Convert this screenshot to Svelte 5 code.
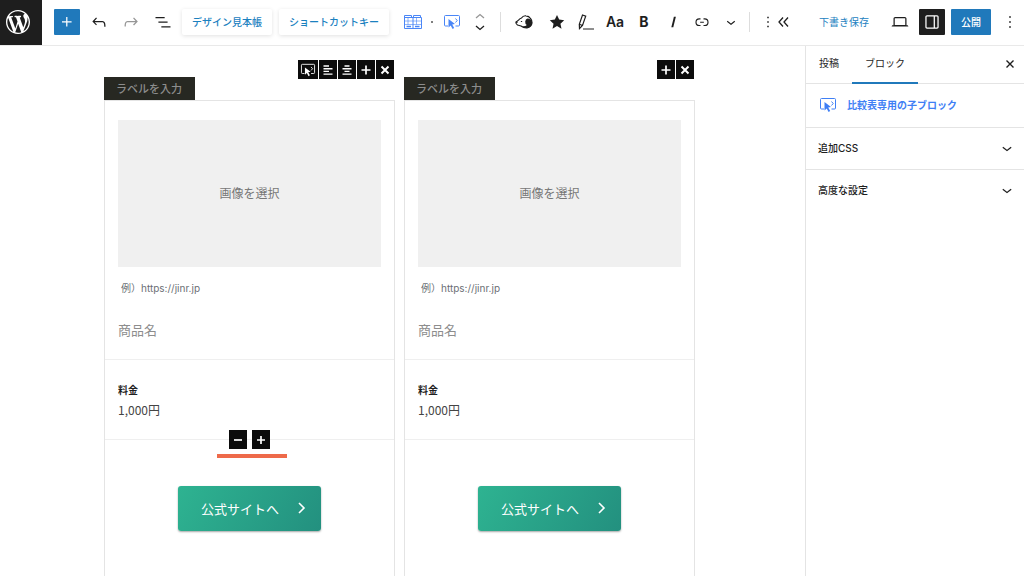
<script lang="ts">
  let activeTab = $state('block');

  const glyphs: Record<string, string> = {
    wordpress:
      'M20 10c0-5.51-4.49-10-10-10C4.48 0 0 4.49 0 10c0 5.52 4.48 10 10 10 5.51 0 10-4.48 10-10zM7.78 15.37L4.37 6.22c.55-.02 1.17-.08 1.17-.08.5-.06.44-1.13-.06-1.11 0 0-1.45.11-2.37.11-.18 0-.37 0-.58-.01C4.12 2.69 6.87 1.11 10 1.11c2.33 0 4.45.87 6.05 2.34-.68-.11-1.65.39-1.65 1.58 0 .74.45 1.36.9 2.1.35.61.55 1.36.55 2.46 0 1.49-1.4 5-1.4 5l-3.03-8.37c.54-.02.82-.17.82-.17.5-.05.44-1.25-.06-1.22 0 0-1.44.12-2.38.12-.87 0-2.33-.12-2.33-.12-.5-.03-.56 1.2-.06 1.22l.92.08 1.26 3.41zM17.41 10c.24-.64.74-1.87.43-4.25.7 1.29 1.05 2.71 1.05 4.25 0 3.29-1.73 6.24-4.4 7.78.97-2.59 1.94-5.2 2.92-7.78zM6.1 18.09C3.12 16.65 1.11 13.53 1.11 10c0-1.3.23-2.48.72-3.59C3.25 10.3 4.67 14.2 6.1 18.09zm4.03-6.63l2.58 6.98c-.86.29-1.76.45-2.71.45-.79 0-1.57-.11-2.29-.33.81-2.38 1.62-4.74 2.42-7.1z',
    plus: 'M11 12.5V17.5H12.5V12.5H17.5V11H12.5V6H11V11H6V12.5H11Z',
    undo: 'M18.3 11.7c-.6-.6-1.4-.9-2.3-.9H6.7l2.9-3.3-1.1-1-4.5 5L8.5 16l1-1-2.7-2.7H16c.5 0 .9.2 1.3.5 1 1 1 3.4 1 4.5v.3h1.5v-.2c0-1.5 0-4.3-1.5-5.7z',
    redo: 'M15.6 6.5l-1.1 1 2.9 3.3H8c-.9 0-1.7.3-2.3.9-1.4 1.5-1.4 4.2-1.4 5.6v.2h1.5v-.3c0-1.1 0-3.5 1-4.5.3-.3.7-.5 1.3-.5h9.2L14.5 15l1.1 1.1 4.6-4.6-4.6-5z',
    outline: 'M3 6h11v1.5H3V6Zm3.5 5.5h11V13h-11v-1.5ZM21 17H10v1.5h11V17Z',
    star: 'M12 2.6l2.9 6.2 6.7.8-5 4.6 1.4 6.7-6-3.4-6 3.4 1.4-6.7-5-4.6 6.7-.8z',
    italic: 'M13.2 5h2.6l-3.4 14H9.800z',
    link: 'M10 17.389H8.444A5.194 5.194 0 1 1 8.444 7H10v1.5H8.444a3.694 3.694 0 0 0 0 7.389H10v1.5ZM14 7h1.556a5.194 5.194 0 0 1 0 10.39H14v-1.5h1.556a3.694 3.694 0 0 0 0-7.39H14V7Zm-4.5 6h5v-1.5h-5V13Z',
    chevron: 'M17.5 11.6L12 16l-5.5-4.4.9-1.2L12 14l4.5-3.6 1 1.2z',
    dots: 'M13 19h-2v-2h2v2zm0-6h-2v-2h2v2zm0-6h-2V5h2v2z',
    laptop:
      'M20.5 16h-.7V8c0-1.1-.9-2-2-2H6.2c-1.1 0-2 .9-2 2v8h-.7c-.8 0-1.5.7-1.5 1.5h20c0-.8-.7-1.5-1.5-1.5zM5.7 8c0-.3.2-.5.5-.5h11.6c.3 0 .5.2.5.5v7.6H5.7V8z',
    drawer:
      'M18 4H6c-1.1 0-2 .9-2 2v12c0 1.1.9 2 2 2h12c1.1 0 2-.9 2-2V6c0-1.1-.9-2-2-2zm-4 14.5H6c-.3 0-.5-.2-.5-.5V6c0-.3.2-.5.5-.5h8v13zm4.500-.5c0 .3-.2.5-.5.5h-2.500v-13H18c.3 0 .5.2.5.5v12z',
  };

  const products = [
    { id: 'a', selected: true },
    { id: 'b', selected: false },
  ];

  const panels = ['追加CSS', '高度な設定'];
</script>

{#snippet icon(name: string, size = 20)}
  <svg
    width={size}
    height={size}
    viewBox={name === 'wordpress' ? '0 0 20 20' : '0 0 24 24'}
    fill="currentColor"
    aria-hidden="true"><path d={glyphs[name]} /></svg>
{/snippet}

{#snippet pointer(width: number)}
  <svg {width} height={width - 2} viewBox="0 0 18 16" fill="none" stroke="currentColor" aria-hidden="true">
    <path d="M5 12H2.500Q1.500 12 1.500 11V2.500Q1.500 1.500 2.500 1.500H15.500Q16.500 1.500 16.500 2.500V11Q16.500 12 15.500 12H12.500" />
    <path d="M12.500 4.500l1.700 2-1.700 2" />
    <path d="M5.500 5l6.500 5-2.800.5 2 3.600-1.600.9-1.900-3.600-2.200 2z" fill="currentColor" stroke="none" />
  </svg>
{/snippet}

{#snippet stroke(d: string, width = 2, size = 18)}
  <svg width={size} height={size} viewBox="0 0 18 18" fill="none" stroke="currentColor" stroke-width={width} aria-hidden="true">
    <path {d} />
  </svg>
{/snippet}

<div class="page">
  <header class="topbar">
    <a class="home" href="#home" aria-label="WordPress">{@render icon('wordpress', 24)}</a>
    <button class="square primary" aria-label="追加">{@render icon('plus', 20)}</button>

    <div class="history">
      <button aria-label="元に戻す">{@render icon('undo')}</button>
      <button class="muted" aria-label="やり直し">{@render icon('redo')}</button>
      <button aria-label="リスト表示">{@render icon('outline')}</button>
    </div>

    <div class="chips">
      <button class="chip">デザイン見本帳</button>
      <button class="chip">ショートカットキー</button>
    </div>

    <div class="block-tools">
      <button class="blue" aria-label="比較表">
        <svg width="20" height="18" viewBox="0 0 20 18" fill="none" stroke="currentColor" aria-hidden="true">
          <path d="M1.500 2.500H8.500V4.500M1.500 2.500V15.500H18.500V4.500H1.500M10.500 4.500V2.500H17.500V4.500M10 4.500V15.500" />
          <path d="M1.500 8H18.500M1.500 11.500H18.500M5 4.500V11.500M13.500 4.500V11.500" opacity=".6" />
          <path d="M3.500 13.500H8M12 13.500H16.500" stroke-width="1.400" />
        </svg>
      </button>
      <span class="dot"></span>
      <button class="blue" aria-label="子ブロック">{@render pointer(18)}</button>
      <div class="mover">
        <button class="muted" aria-label="上に移動">
          <svg width="12" height="8" viewBox="0 0 12 8" fill="none" stroke="currentColor" stroke-width="1.300" aria-hidden="true"><path d="M2 6l4-3.500L10 6" /></svg>
        </button>
        <button aria-label="下に移動">
          <svg width="12" height="8" viewBox="0 0 12 8" fill="none" stroke="currentColor" stroke-width="1.300" aria-hidden="true"><path d="M2 2l4 3.500L10 2" /></svg>
        </button>
      </div>
    </div>

    <div class="formats">
      <button aria-label="吹き出し">
        <svg width="20" height="18" viewBox="0 0 20 18" aria-hidden="true">
          <path d="M7.500 5Q9 2.500 12 2.800Q15 3 16.500 5.500Q18.300 7.500 18 10Q17.500 14 13 14.800Q9.500 15 7 13L3.500 12Q1.500 10.500 2 9L4.500 7.200Q5.500 5.500 7.500 5z" fill="#fff" stroke="currentColor" stroke-width="1.200" />
          <path d="M13.500 5.500Q17 5.500 18.200 9Q18.200 14 13 15Q9.800 15 8.500 13.200Q11.500 13.500 12.800 12Q11 11 11.200 8.500Q11.500 6 13.500 5.500z" fill="currentColor" />
          <path d="M1.800 9l1.800.4M7.500 8v1" stroke="currentColor" stroke-width="1.300" />
        </svg>
      </button>
      <button aria-label="お気に入り">{@render icon('star', 18)}</button>
      <button aria-label="マーカー">
        <svg width="18" height="18" viewBox="0 0 18 18" fill="none" stroke="currentColor" stroke-width="1.200" aria-hidden="true">
          <path d="M5.500 2L8.700 3.200L5.500 12.500L2.500 15.500L2.300 11.300zM2.400 11.300L5.500 12.500" />
          <path d="M6 16H17" stroke-width="1" />
        </svg>
      </button>
      <button class="letters" aria-label="文字サイズ">Aa</button>
      <button class="letters strong" aria-label="太字">B</button>
      <button aria-label="イタリック">{@render icon('italic', 18)}</button>
      <button aria-label="リンク">{@render icon('link', 18)}</button>
      <button aria-label="さらに表示">{@render icon('chevron', 18)}</button>
    </div>

    <div class="overflow">
      <button aria-label="オプション">{@render icon('dots', 18)}</button>
      <button aria-label="ツールバーを隠す">{@render stroke('M8 4.500L4 9l4 4.500M13 4.500L9 9l4 4.500', 1.3, 18)}</button>
    </div>

    <div class="actions">
      <button class="draft">下書き保存</button>
      <button aria-label="プレビュー">{@render icon('laptop')}</button>
      <div class="publish-group">
        <button class="square dark" aria-label="設定">{@render icon('drawer')}</button>
        <button class="publish">公開</button>
      </div>
      <button aria-label="その他">{@render icon('dots')}</button>
    </div>
  </header>

  <div class="body">
    <main class="canvas">
      {#each products as product (product.id)}
        <section class="product">
          <div class="product-head">
            <input class="label" aria-label="ラベル" placeholder="ラベルを入力" />
            <div class="tiles">
              {#if product.selected}
                <button class="tile wide" aria-label="ボタン">{@render pointer(16)}</button>
                <button class="tile" aria-label="左寄せ">{@render stroke('M4.500 5H10M4.500 7.700H13.500M4.500 10.400H10M4.500 13.100H13.500', 1.4)}</button>
                <button class="tile" aria-label="中央寄せ">{@render stroke('M6.500 5H11.500M4.500 7.700H13.500M6.500 10.400H11.500M4.500 13.100H13.500', 1.4)}</button>
              {/if}
              <button class="tile" aria-label="列を追加">{@render stroke('M9 4.500V13.500M4.500 9H13.500', 1.7)}</button>
              <button class="tile" aria-label="列を削除">{@render stroke('M5.500 5.500L12.500 12.500M12.500 5.500L5.500 12.500', 2)}</button>
            </div>
          </div>

          <div class="card">
            <div class="intro">
              <button class="image">画像を選択</button>
              <input class="url" aria-label="リンク先" placeholder="例）https://jinr.jp" />
              <input class="name" aria-label="商品名" placeholder="商品名" />
            </div>
            <div class="price">
              <h3>料金</h3>
              <p>1,000円</p>
              {#if product.selected}
                <div class="row-tools">
                  <div class="row-buttons">
                    <button class="tile" aria-label="行を削除">{@render stroke('M5 9H13', 1.7)}</button>
                    <button class="tile" aria-label="行を追加">{@render stroke('M9 5V13M5 9H13', 1.7)}</button>
                  </div>
                  <span class="underline"></span>
                </div>
              {/if}
            </div>
            <div class="cta">
              <a class="official" href="#official">
                <span>公式サイトへ</span>
                <svg width="10" height="14" viewBox="0 0 10 14" fill="none" stroke="currentColor" stroke-width="1.600" aria-hidden="true"><path d="M2 1l5 5-5 5" /></svg>
              </a>
            </div>
          </div>
        </section>
      {/each}
    </main>

    <aside class="sidebar">
      <div class="tabs" role="tablist">
        <button role="tab" aria-selected={activeTab === 'post'} onclick={() => (activeTab = 'post')}>投稿</button>
        <button role="tab" aria-selected={activeTab === 'block'} onclick={() => (activeTab = 'block')}>ブロック</button>
        <button class="close" aria-label="閉じる">{@render stroke('M5.500 5.500L12.500 12.500M12.500 5.500L5.500 12.500', 1.4)}</button>
      </div>
      <h2>{@render pointer(18)}<span>比較表専用の子ブロック</span></h2>
      {#each panels as panel}
        <button class="panel" aria-expanded="false"><span>{panel}</span>{@render icon('chevron')}</button>
      {/each}
    </aside>
  </div>
</div>

<style>
  .page {
    --ink: #1e1e1e;
    --blue: #2079bb;
    --bright: #3f7ff5;
    --line: #e4e4e4;
    display: flex;
    flex-direction: column;
    min-height: 100vh;
    background: #fff;
    color: var(--ink);
    font: 10px/16px Inter, 'Noto Sans CJK JP', sans-serif;
  }

  .page :global(*) {
    box-sizing: border-box;
  }

  button,
  input {
    margin: 0;
    padding: 0;
    border: 0;
    background: none;
    color: inherit;
    font: inherit;
  }

  button {
    display: flex;
    align-items: center;
    justify-content: center;
    cursor: pointer;
    white-space: nowrap;
  }

  svg {
    display: block;
    flex: none;
  }

  /* top bar */
  .topbar {
    display: flex;
    align-items: center;
    height: 46px;
    border-bottom: 1px solid #e9e9e9;
    padding: 0 4px 2px 0;
  }

  .topbar > * {
    flex: none;
  }

  .home {
    display: flex;
    align-items: center;
    align-self: flex-start;
    width: 42px;
    height: 45px;
    margin-right: 12px;
    padding: 0 0 2px 6px;
    background: var(--ink);
    color: #fff;
  }

  .square {
    width: 26px;
    height: 26px;
    border-radius: 1px;
  }

  .primary {
    background: var(--blue);
    color: #fff;
  }

  .dark {
    background: var(--ink);
    color: #fff;
  }

  .history {
    display: flex;
    gap: 12px;
    margin: 0 9px;
  }

  .muted {
    color: #969696;
  }

  .chips {
    display: flex;
    gap: 7px;
  }

  .chip {
    height: 26px;
    padding: 0 10px;
    border-radius: 2px;
    background: #fff;
    box-shadow: 0 1px 4px rgba(0, 0, 0, 0.12);
    color: #1b81bf;
    font-weight: 500;
  }

  .block-tools {
    display: flex;
    align-items: center;
    margin-left: 14px;
    padding-right: 14px;
    border-right: 1px solid #ddd;
    height: 20px;
  }

  .blue {
    color: #4a86f7;
  }

  .dot {
    width: 2px;
    height: 2px;
    margin: 0 10px 0 8px;
    border-radius: 1px;
    background: #555;
  }

  .mover {
    display: flex;
    flex-direction: column;
    gap: 4px;
    margin-left: 13px;
  }

  .formats {
    display: flex;
    align-items: center;
    height: 20px;
    margin-left: 13px;
    padding-right: 8px;
    border-right: 1px solid #ddd;
  }

  .formats button {
    width: 20px;
    margin-right: 9px;
  }

  .formats button:first-child {
    margin-right: 13px;
  }

  .formats button:last-child {
    margin-right: 0;
  }

  .letters {
    font: 600 14px/20px Inter, sans-serif;
  }

  .strong {
    font-weight: 700;
  }

  .overflow {
    display: flex;
    margin-left: 9px;
  }

  .overflow button + button {
    margin-left: -2px;
  }

  .actions {
    display: flex;
    align-items: center;
    gap: 9px;
    margin-left: auto;
  }

  .draft {
    margin-right: 12px;
    color: #1b81bf;
  }

  .publish-group {
    display: flex;
    gap: 6px;
  }

  .publish {
    width: 40px;
    height: 26px;
    border-radius: 1px;
    background: var(--blue);
    color: #fff;
    font-weight: 500;
  }

  /* editor canvas */
  .body {
    display: flex;
    flex: 1;
  }

  .canvas {
    display: grid;
    grid-template-columns: 1fr 1fr;
    gap: 9px;
    flex: 1;
    min-width: 0;
    padding: 14px 110px 0 104px;
    font-family: 'Noto Sans CJK JP', sans-serif;
  }

  .product {
    display: flex;
    flex-direction: column;
    min-width: 0;
  }

  .product-head {
    display: flex;
    justify-content: space-between;
    height: 40px;
    padding-right: 1px;
  }

  .label {
    align-self: flex-end;
    width: 91px;
    height: 23px;
    padding: 0 12px 1px;
    background: #272822;
    color: #fff;
    font-size: 11px;
    font-weight: 500;
  }

  input::placeholder {
    color: #8d8d8d;
    opacity: 1;
  }

  .tiles {
    display: flex;
    gap: 1px;
  }

  .tile {
    width: 18px;
    height: 19px;
    background: #0c0c0c;
    color: #fff;
  }

  .wide {
    width: 20px;
  }

  .card {
    flex: 1;
    border: 1px solid var(--line);
    border-bottom: 0;
  }

  .intro {
    display: flex;
    flex-direction: column;
    height: 259px;
    padding: 19px 13px 0;
    border-bottom: 1px solid #efefef;
  }

  .image {
    height: 147px;
    padding-bottom: 2px;
    background: #f0f0f0;
    color: #777;
    font-size: 12px;
  }

  .url {
    height: 20px;
    margin-top: 11px;
    padding: 0 3px;
    font-family: Inter, 'Noto Sans CJK JP', sans-serif;
  }

  .url::placeholder {
    color: #6c6f75;
  }

  .name {
    height: 24px;
    margin-top: 19px;
    font-size: 13px;
  }

  .price {
    position: relative;
    height: 80px;
    padding: 22px 13px 0;
    border-bottom: 1px solid #efefef;
  }

  h3,
  p {
    margin: 0;
  }

  h3 {
    font-size: 10px;
    line-height: 16px;
    font-weight: 700;
  }

  p {
    color: #444;
    font-size: 12px;
    line-height: 24px;
  }

  .row-tools {
    position: absolute;
    bottom: -19px;
    left: 0;
    right: 0;
    display: flex;
    flex-direction: column;
    align-items: center;
    gap: 5px;
  }

  .row-buttons {
    display: flex;
    gap: 5px;
  }

  .underline {
    width: 70px;
    height: 4px;
    margin-left: 4px;
    background: #ee6a4a;
  }

  .cta {
    display: flex;
    justify-content: center;
    padding-top: 46px;
  }

  .official {
    display: flex;
    align-items: center;
    justify-content: space-between;
    width: 143px;
    height: 45px;
    padding: 0 14px 0 23px;
    border-radius: 3px;
    background: linear-gradient(120deg, #2eb391, #23907f);
    box-shadow: 0 1px 2px rgba(0, 0, 0, 0.35);
    color: #fff;
    font-size: 13px;
    text-decoration: none;
  }

  /* settings sidebar */
  .sidebar {
    width: 219px;
    flex: none;
    border-left: 1px solid var(--line);
  }

  .tabs {
    display: flex;
    height: 38px;
    border-bottom: 1px solid var(--line);
  }

  .tabs button {
    height: 38px;
    padding: 0 13px 2px;
    border-bottom: 2px solid transparent;
  }

  .tabs [aria-selected='true'] {
    border-bottom-color: var(--blue);
  }

  .tabs .close {
    margin-left: auto;
    padding: 0 5px;
  }

  h2 {
    display: flex;
    align-items: center;
    gap: 10px;
    height: 43px;
    margin: 0;
    padding: 0 13px 2px;
    color: var(--bright);
    font-size: 10px;
    font-weight: 700;
  }

  .panel {
    justify-content: space-between;
    width: 100%;
    height: 42px;
    padding: 0 7px 2px 12px;
    border-top: 1px solid var(--line);
    font-weight: 500;
  }
</style>
